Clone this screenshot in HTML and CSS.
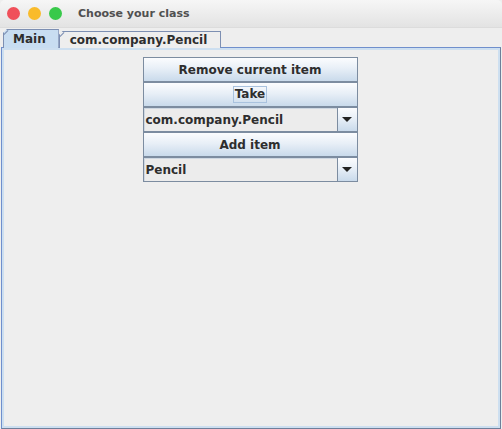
FILE: index.html
```html
<!DOCTYPE html>
<html>
<head>
<meta charset="utf-8">
<link rel="stylesheet" href="styles.css">
</head>
<body>
<div class="window">
  <div class="titlebar">
    <span class="light red"></span>
    <span class="light yellow"></span>
    <span class="light green"></span>
    <span class="title">Choose your class</span>
  </div>
  <div class="tabs">
    <div class="tab selected">Main</div>
    <div class="tab">com.company.Pencil</div>
  </div>
  <div class="panel">
    <div class="stack">
      <div class="btn">Remove current item</div>
      <div class="btn"><span class="focus">Take</span></div>
      <div class="combo">
        <div class="field">com.company.Pencil</div>
        <div class="arrow"><span class="tri"></span></div>
      </div>
      <div class="btn">Add item</div>
      <div class="combo">
        <div class="field">Pencil</div>
        <div class="arrow"><span class="tri"></span></div>
      </div>
    </div>
  </div>
</div>
</body>
</html>
```

FILE: styles.css
```css
* { box-sizing: border-box; }
html, body {
  margin: 0;
  padding: 0;
  background: #eeeeee;
}
body {
  width: 502px;
  height: 429px;
  overflow: hidden;
  font-family: "DejaVu Sans", "Liberation Sans", sans-serif;
  font-weight: bold;
  font-size: 12px;
  color: #2e2e2e;
}
.window {
  width: 502px;
  height: 429px;
  display: flex;
  flex-direction: column;
}
.titlebar {
  height: 28px;
  flex: none;
  display: flex;
  align-items: center;
  padding-left: 7px;
  gap: 8px;
  background: linear-gradient(to bottom, #f6f6f6, #e3e3e3);
  border-bottom: 1px solid #dcdcdc;
  border-top-left-radius: 5px;
  border-top-right-radius: 5px;
}
.light {
  width: 13px;
  height: 13px;
  border-radius: 50%;
  flex: none;
}
.red { background: #f0505a; }
.yellow { background: #f9bb2b; }
.green { background: #38c94a; }
.title {
  margin-left: 8px;
  color: #505050;
  font-size: 11px;
}
.tabs {
  height: 20px;
  flex: none;
  display: flex;
  align-items: flex-end;
  padding-left: 3px;
  position: relative;
  z-index: 2;
  margin-bottom: -1px;
}
.tab {
  height: 17px;
  border: 1px solid #7d8fb2;
  border-bottom: none;
  padding: 0 13px 0 10px;
  line-height: 16px;
  background: #eeeeee;
  clip-path: polygon(4px 0, 100% 0, 100% 100%, 0 100%, 0 4px);
  position: relative;
}
.tab::before {
  content: "";
  position: absolute;
  left: -1px;
  top: 2px;
  width: 6px;
  height: 1px;
  background: #7d8fb2;
  transform: rotate(-45deg);
  transform-origin: center;
}
.tab.selected {
  height: 19px;
  background: #c8ddf1;
  padding: 0 12px 0 9px;
  line-height: 18px;
}
.panel {
  flex: 1;
  margin: 0 1px 0 1px;
  border: 1px solid #6f8fcc;
  border-right-color: #6e7f9a;
  border-bottom-color: #6e7f9a;
  box-shadow: inset 0 0 0 2px #cddff0;
  padding: 9px 2px 0 0;
}
.stack {
  width: 215px;
  margin: 0 auto;
  display: flex;
  flex-direction: column;
}
.btn {
  height: 25px;
  border: 1px solid #7c8ca0;
  background: linear-gradient(to bottom, #fbfcfe 0%, #e8eff7 45%, #c9daeb 100%);
  display: flex;
  align-items: center;
  justify-content: center;
}
.focus {
  border: 1px solid #a9c2de;
  padding: 0 1px;
  line-height: 15px;
}
.combo {
  height: 25px;
  border: 1px solid #7c8ca0;
  display: flex;
  background: #ececec;
}
.field {
  flex: 1;
  display: flex;
  align-items: center;
  padding-left: 2px;
  border-right: 1px solid #7c8ca0;
  box-shadow: inset 1px 1px 0 #cfd8e2;
}
.arrow {
  width: 19px;
  flex: none;
  display: flex;
  align-items: center;
  justify-content: center;
  background: linear-gradient(to bottom, #fbfcfe 0%, #e8eff7 45%, #c9daeb 100%);
}
.tri {
  width: 0;
  height: 0;
  border-left: 5px solid transparent;
  border-right: 5px solid transparent;
  border-top: 5px solid #222222;
}
```
